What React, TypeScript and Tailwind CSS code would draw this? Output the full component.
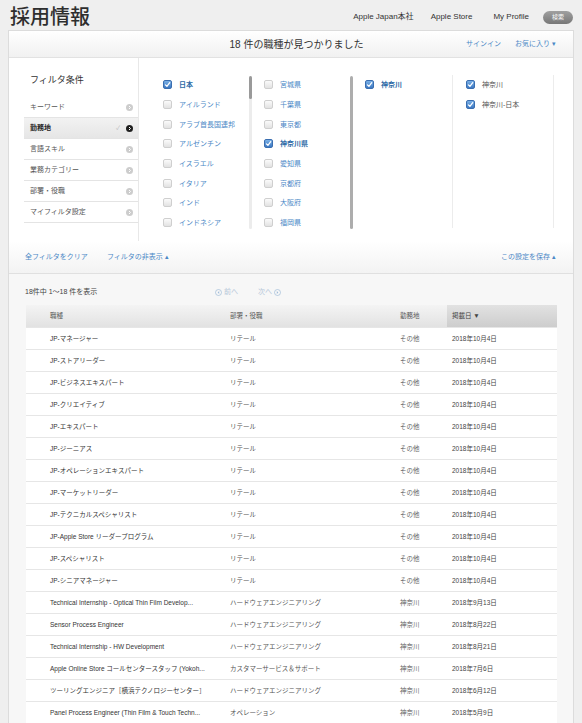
const COUNTRIES = [
  { name: '日本', checked: true },
  { name: 'アイルランド' },
  { name: 'アラブ首長国連邦' },
  { name: 'アルゼンチン' },
  { name: 'イスラエル' },
  { name: 'イタリア' },
  { name: 'インド' },
  { name: 'インドネシア' },
]

const PREFS = [
  { name: '宮城県' },
  { name: '千葉県' },
  { name: '東京都' },
  { name: '神奈川県', checked: true },
  { name: '愛知県' },
  { name: '京都府' },
  { name: '大阪府' },
  { name: '福岡県' },
]

const MENU = ['キーワード', '勤務地', '言語スキル', '業務カテゴリー', '部署・役職', 'マイフィルタ設定']

const JOBS = [
  ['JP-マネージャー', 'リテール', 'その他', '2018年10月4日'],
  ['JP-ストアリーダー', 'リテール', 'その他', '2018年10月4日'],
  ['JP-ビジネスエキスパート', 'リテール', 'その他', '2018年10月4日'],
  ['JP-クリエイティブ', 'リテール', 'その他', '2018年10月4日'],
  ['JP-エキスパート', 'リテール', 'その他', '2018年10月4日'],
  ['JP-ジーニアス', 'リテール', 'その他', '2018年10月4日'],
  ['JP-オペレーションエキスパート', 'リテール', 'その他', '2018年10月4日'],
  ['JP-マーケットリーダー', 'リテール', 'その他', '2018年10月4日'],
  ['JP-テクニカルスペシャリスト', 'リテール', 'その他', '2018年10月4日'],
  ['JP-Apple Store リーダープログラム', 'リテール', 'その他', '2018年10月4日'],
  ['JP-スペシャリスト', 'リテール', 'その他', '2018年10月4日'],
  ['JP-シニアマネージャー', 'リテール', 'その他', '2018年10月4日'],
  ['Technical Internship - Optical Thin Film Develop...', 'ハードウェアエンジニアリング', '神奈川', '2018年9月13日'],
  ['Sensor Process Engineer', 'ハードウェアエンジニアリング', '神奈川', '2018年8月22日'],
  ['Technical Internship - HW Development', 'ハードウェアエンジニアリング', '神奈川', '2018年8月21日'],
  ['Apple Online Store コールセンタースタッフ (Yokoh...', 'カスタマーサービス＆サポート', '神奈川', '2018年7月6日'],
  ['ツーリングエンジニア［横浜テクノロジーセンター］', 'ハードウェアエンジニアリング', '神奈川', '2018年6月12日'],
  ['Panel Process Engineer (Thin Film & Touch Techn...', 'オペレーション', '神奈川', '2018年5月9日'],
]

function Checkbox({ checked }: { checked?: boolean }) {
  if (checked) {
    return (
      <span className="w-[9px] h-[9px] rounded-[2px] flex-shrink-0 flex items-center justify-center bg-gradient-to-b from-[#7ab0e6] to-[#3c78c2] border border-[#3a6eb0]">
        <svg width="7" height="7" viewBox="0 0 10 10">
          <path d="M2 5.5 L4.2 7.6 L8.2 2.4" stroke="#fff" strokeWidth="1.8" fill="none" strokeLinecap="round" strokeLinejoin="round" />
        </svg>
      </span>
    )
  }
  return <span className="w-[9px] h-[9px] rounded-[2px] flex-shrink-0 bg-gradient-to-b from-[#fbfbfb] to-[#e2e2e2] border border-[#cfcfcf]" />
}

function Arrow({ dark }: { dark?: boolean }) {
  return (
    <span className={`w-[7px] h-[7px] rounded-full flex items-center justify-center ${dark ? 'bg-[#1e1e1e]' : 'bg-[#cdcdcd]'}`}>
      <svg width="5" height="5" viewBox="0 0 10 10">
        <path d="M4 2 L7 5 L4 8" stroke="#fff" strokeWidth="2" fill="none" />
      </svg>
    </span>
  )
}

function CircleNav({ dir }: { dir: 'l' | 'r' }) {
  return (
    <svg width="7" height="7" viewBox="0 0 10 10">
      <circle cx="5" cy="5" r="4.3" stroke="#9fbbd8" strokeWidth="1" fill="none" />
      <path d={dir === 'l' ? 'M6 3 L3.8 5 L6 7 Z' : 'M4 3 L6.2 5 L4 7 Z'} fill="#9fbbd8" />
    </svg>
  )
}

function ListRow({ name, checked, blue = true }: { name: string; checked?: boolean; blue?: boolean }) {
  return (
    <div className="h-[19.7px] flex items-center gap-[7px]">
      <Checkbox checked={checked} />
      <span
        className={`text-[7px] leading-none ${blue ? (checked ? 'text-[#2d6aa6] font-bold' : 'text-[#4b88c6]') : 'text-[#555]'}`}
      >
        {name}
      </span>
    </div>
  )
}

export default function App() {
  return (
    <div className="min-h-screen bg-[#efefef] text-[#333] font-['Liberation_Sans','Noto_Sans_CJK_JP',sans-serif]">
      {/* top header */}
      <div className="h-[30px] flex items-center pl-[10px]">
        <h1 className="text-[20px] leading-none font-medium text-[#2e2e2e] mt-[3px]">採用情報</h1>
        <div className="ml-auto flex items-center text-[8px] text-[#333] mt-[4px]">
          <span>Apple Japan本社</span>
          <span className="ml-[17px]">Apple Store</span>
          <span className="ml-[21px]">My Profile</span>
          <span className="ml-[14px] mr-[9px] w-[30px] h-[13px] rounded-full bg-gradient-to-b from-[#a0a0a0] to-[#777] text-white text-[6px] flex items-center justify-center">
            検索
          </span>
        </div>
      </div>

      {/* main card */}
      <div className="mx-[8px] border border-[#dcdcdc] bg-[#f7f7f7]">
        {/* title bar */}
        <div className="h-[27px] flex items-center bg-gradient-to-b from-white to-[#f1f1f1] border-b border-[#e2e2e2]">
          <div className="flex-1" />
          <span className="text-[10px] text-[#333] ml-[28px]">18 件の職種が見つかりました</span>
          <div className="flex-1 flex justify-end items-center text-[7px] text-[#4b88c6] pr-[17px]">
            <span>サインイン</span>
            <span className="ml-[14px]">お気に入り ▾</span>
          </div>
        </div>

        {/* filter */}
        <div className="bg-white flex h-[183px]">
          <div className="w-[130px] border-r border-[#e8e8e8] flex flex-col">
            <p className="text-[9px] leading-[12px] pl-[21px] pt-[16px] text-[#333]">フィルタ条件</p>
            <div className="ml-[15px] mt-[11px]">
              {MENU.map((m, i) => {
                const sel = i === 1
                return (
                  <div
                    key={m}
                    className={`h-[21px] flex items-center pl-[6px] pr-[5px] border-b border-[#e4e4e4] ${sel ? 'bg-gradient-to-b from-[#f2f2f2] to-[#e6e6e6]' : ''}`}
                  >
                    <span className={`text-[7px] ${sel ? 'font-bold text-[#222]' : 'text-[#555]'}`}>{m}</span>
                    {sel && <span className="ml-auto mr-[6px] text-[6px] text-[#bbb]">✓</span>}
                    <span className={sel ? '' : 'ml-auto'}>
                      <Arrow dark={sel} />
                    </span>
                  </div>
                )
              })}
            </div>
          </div>

          <div className="flex mt-[17px] h-[158px]">
            <div className="w-[110px] pl-[24px]">
              {COUNTRIES.map(c => <ListRow key={c.name} {...c} />)}
            </div>
            <div className="w-[3px] h-[153px] mt-[1px] bg-[#ececec] rounded-full flex flex-col">
              <div className="h-[23px] bg-[#9a9a9a] rounded-full" />
            </div>

            <div className="w-[98px] pl-[12px]">
              {PREFS.map(c => <ListRow key={c.name} {...c} />)}
            </div>
            <div className="w-[3px] h-[153px] mt-[1px] bg-[#adadad] rounded-full" />

            <div className="w-[99px] pl-[12px]">
              <ListRow name="神奈川" checked />
            </div>
            <div className="w-px h-[153px] bg-[#ececec]" />

            <div className="w-[100px] pl-[13px]">
              <ListRow name="神奈川" checked blue={false} />
              <ListRow name="神奈川-日本" checked blue={false} />
            </div>
            <div className="w-px h-[153px] bg-[#ececec]" />
          </div>
        </div>

        {/* filter actions */}
        <div className="h-[33px] flex items-center bg-gradient-to-b from-white to-[#f3f3f3] border-b border-[#e0e0e0] text-[7px] text-[#4b88c6] pl-[16px] pr-[17px]">
          <span>全フィルタをクリア</span>
          <span className="ml-[19px]">フィルタの非表示 ▴</span>
          <span className="ml-auto">この設定を保存 ▴</span>
        </div>

        {/* results */}
        <div className="pt-[7px] pl-[16px] flex items-center h-[23px] box-content">
          <span className="text-[7px] text-[#444] w-[190px]">18件中 1〜18 件を表示</span>
          <span className="flex items-center gap-[2px] text-[7px] text-[#b5c6d8]">
            <CircleNav dir="l" />
            前へ
          </span>
          <span className="flex items-center gap-[2px] text-[7px] text-[#b5c6d8] ml-[20px]">
            次へ
            <CircleNav dir="r" />
          </span>
        </div>

        <div className="mt-[1px] ml-[17px] mr-[16px] bg-white">
          <div className="grid grid-cols-[200px_170px_51px_1fr] h-[22px] bg-gradient-to-b from-[#f4f4f4] to-[#e2e2e2] text-[6.5px] text-[#555]">
            <div className="pl-[24px] flex items-center">職種</div>
            <div className="pl-[4px] flex items-center">部署・役職</div>
            <div className="pl-[4px] flex items-center">勤務地</div>
            <div className="pl-[5px] flex items-center bg-gradient-to-b from-[#e2e2e2] to-[#cdcdcd] text-[#444]">掲載日 ▼</div>
          </div>
          {JOBS.map((j, i) => (
            <div key={i} className="grid grid-cols-[200px_170px_51px_1fr] h-[22px] border-t border-[#e6e6e6] text-[6.5px]">
              <div className="pl-[24px] flex items-center text-[#333] whitespace-nowrap overflow-hidden">{j[0]}</div>
              <div className="pl-[4px] flex items-center text-[#555] whitespace-nowrap">{j[1]}</div>
              <div className="pl-[4px] flex items-center text-[#666]">{j[2]}</div>
              <div className="pl-[5px] flex items-center text-[#444]">{j[3]}</div>
            </div>
          ))}
        </div>
        <div className="h-[20px]" />
      </div>
    </div>
  )
}
